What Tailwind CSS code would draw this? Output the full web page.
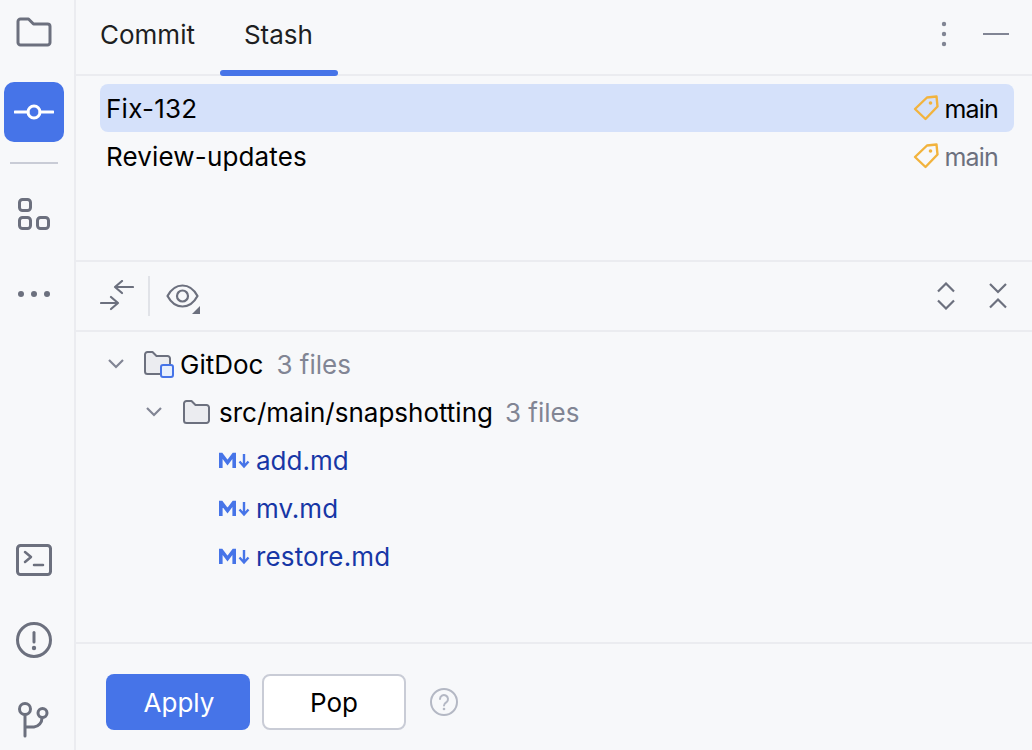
<!doctype html>
<html><head><meta charset="utf-8"><script src="https://cdn.jsdelivr.net/npm/@tailwindcss/browser@4"></script></head>
<body class="m-0">
<div class="flex w-[1032px] h-[750px] overflow-hidden bg-[#f7f8fa] font-['Inter',sans-serif] text-[26px] leading-[48px] text-black">
  <!-- sidebar -->
  <aside class="w-[76px] shrink-0 border-r-2 border-[#ebecf0] flex flex-col items-center pr-[10px] pl-[4px]">
    <svg class="mt-[14px] shrink-0" width="38" height="38" viewBox="0 0 38 38" fill="none" stroke="#6c707e" stroke-width="3"><path d="M3 7.500a2.500 2.500 0 0 1 2.500-2.500h8l5 5h14a2.500 2.500 0 0 1 2.500 2.500v16a2.500 2.500 0 0 1-2.500 2.500h-27a2.500 2.500 0 0 1-2.500-2.500z" stroke-linejoin="round"/></svg>
    <div class="mt-[30px] w-[60px] h-[60px] rounded-[10px] bg-[#4674e8] flex items-center justify-center shrink-0">
      <svg width="40" height="40" viewBox="0 0 40 40" fill="none" stroke="#fff" stroke-width="3"><circle cx="20" cy="20" r="6"/><path d="M1 20h13M26 20h13" stroke-linecap="round"/></svg>
    </div>
    <div class="mt-[20px] w-[48px] h-[2px] bg-[#c9ccd6] shrink-0"></div>
    <svg class="mt-[33px] shrink-0" width="34" height="34" viewBox="0 0 34 34" fill="none" stroke="#6c707e" stroke-width="3"><rect x="2.500" y="2.500" width="11" height="11" rx="3"/><rect x="2.500" y="20.500" width="11" height="11" rx="3"/><rect x="20.500" y="20.500" width="11" height="11" rx="3"/></svg>
    <svg class="mt-[59px] shrink-0" width="34" height="8" viewBox="0 0 34 8" fill="#6c707e"><circle cx="4" cy="4" r="3"/><circle cx="17" cy="4" r="3"/><circle cx="30" cy="4" r="3"/></svg>
    <svg class="mt-auto shrink-0" width="38" height="34" viewBox="0 0 38 34" fill="none" stroke="#6c707e" stroke-width="3" stroke-linecap="round" stroke-linejoin="round"><rect x="2.500" y="2.500" width="33" height="29" rx="3"/><path d="M10 9l6 5-6 5M19 22h9" stroke-width="2.500"/></svg>
    <svg class="mt-[44px] shrink-0" width="38" height="38" viewBox="0 0 38 38" fill="none" stroke="#6c707e" stroke-width="3"><circle cx="19" cy="19" r="16.500"/><path d="M19 11.500v9.500" stroke-linecap="round"/><circle cx="19" cy="27" r="2.200" fill="#6c707e" stroke="none"/></svg>
    <svg class="mt-[43px] mb-[12px] shrink-0" width="34" height="36" viewBox="0 0 34 36" fill="none" stroke="#6c707e" stroke-width="3" stroke-linecap="round"><circle cx="8" cy="7" r="5.500"/><circle cx="25.500" cy="11" r="4.500"/><path d="M8 13v21M8 25h9a9 9 0 0 0 8-9"/></svg>
  </aside>
  <main class="flex-1 min-w-0 flex flex-col">
    <!-- tabs -->
    <header class="h-[76px] shrink-0 border-b-2 border-[#ebecf0] flex items-start pl-[24px] text-[#1e1f22] relative">
      <span class="mt-[11px]">Commit</span>
      <div class="relative ml-[49px] mt-[11px]">Stash
        <div class="absolute left-[-24px] top-[59px] w-[118px] h-[6px] rounded-[3px] bg-[#4674e8]"></div>
      </div>
      <svg class="ml-auto mt-[21px]" width="6" height="26" viewBox="0 0 6 26" fill="#818594"><circle cx="3" cy="3" r="2.200"/><circle cx="3" cy="13" r="2.200"/><circle cx="3" cy="23" r="2.200"/></svg>
      <div class="ml-[36px] mr-[23px] mt-[33px] w-[26px] h-[2px] bg-[#818594]"></div>
    </header>
    <!-- stashes -->
    <section class="h-[186px] shrink-0 border-b-2 border-[#ebecf0] pt-[8px] pl-[24px] pr-[18px]">
      <div class="h-[48px] rounded-[8px] bg-[#d5e1fa] flex items-center pl-[6px] pr-[16px]">
        <span class="pt-[2px] tracking-[0.25px]">Fix-132</span>
        <svg class="ml-auto mr-[5px]" width="26" height="26" viewBox="0 0 26 26" fill="none" stroke="#f2b33d" stroke-width="2.400" stroke-linejoin="round"><path d="M2 14L14 2.500 23.500 1.500 24.500 11.500 12.500 24z"/><circle cx="17.500" cy="8" r="1.800" fill="#f2b33d" stroke="none"/></svg>
        <span class="pt-[2px] text-[25px] tracking-[-0.8px]">main</span>
      </div>
      <div class="h-[48px] flex items-center pl-[6px] pr-[16px]">
        <span class="pt-[2px] tracking-[0.15px]">Review-updates</span>
        <svg class="ml-auto mr-[5px]" width="26" height="26" viewBox="0 0 26 26" fill="none" stroke="#f2b33d" stroke-width="2.400" stroke-linejoin="round"><path d="M2 14L14 2.500 23.500 1.500 24.500 11.500 12.500 24z"/><circle cx="17.500" cy="8" r="1.800" fill="#f2b33d" stroke="none"/></svg>
        <span class="pt-[2px] text-[25px] tracking-[-0.8px] text-[#6c707e]">main</span>
      </div>
    </section>
    <!-- toolbar -->
    <section class="h-[70px] shrink-0 border-b-2 border-[#ebecf0] flex items-center pl-[24px] pr-[25px]">
      <svg width="34" height="32" viewBox="0 0 34 32" fill="none" stroke="#6c707e" stroke-width="2.200" stroke-linecap="round" stroke-linejoin="round"><path d="M33 7H15M22 1l-7 6 7 6M1 23h17M11 17l7 6-7 6"/></svg>
      <div class="ml-[14px] w-[2px] h-[40px] bg-[#e1e3e8]"></div>
      <div class="ml-[16px] relative w-[36px] h-[32px]">
        <svg width="33" height="24" viewBox="0 0 33 24" class="mt-[4px]" fill="none" stroke="#6c707e" stroke-width="2.200"><path d="M1.500 12C5 5.500 10 1.500 16.500 1.500S28 5.500 31.500 12C28 18.500 23 22.500 16.500 22.500S5 18.500 1.500 12z" stroke-linejoin="round"/><circle cx="16.500" cy="12" r="5.500"/></svg>
        <svg class="absolute right-[2px] bottom-[-2px]" width="8" height="8" viewBox="0 0 8 8" fill="#6c707e"><path d="M8 0v8H0z"/></svg>
      </div>
      <svg class="ml-auto" width="18" height="28" viewBox="0 0 18 28" fill="none" stroke="#6c707e" stroke-width="2.200"><path d="M1 9.500L9 1.500 17 9.500M1 18.500L9 26.500 17 18.500"/></svg>
      <svg class="ml-[34px]" width="18" height="28" viewBox="0 0 18 28" fill="none" stroke="#6c707e" stroke-width="2.200"><path d="M1 2L9 10 17 2M1 25.500L9 17.500 17 25.500"/></svg>
    </section>
    <!-- tree -->
    <section class="h-[312px] shrink-0 border-b-2 border-[#ebecf0] pt-[8px]">
      <div class="h-[48px] flex items-center pl-[32px]">
        <svg width="16" height="10" viewBox="0 0 16 10" fill="none" stroke="#818594" stroke-width="2.200"><path d="M1 1l7 7 7-7"/></svg>
        <span class="ml-[20px] relative w-[32px] h-[26px] shrink-0">
          <svg width="28" height="24" viewBox="0 0 28 24" fill="#ebecf0" stroke="#6c707e" stroke-width="2"><path d="M1 3.500A2.500 2.500 0 0 1 3.500 1h5l4 4h11A2.500 2.500 0 0 1 26 7.500V20.500A2.500 2.500 0 0 1 23.500 23h-20A2.500 2.500 0 0 1 1 20.500z" stroke-linejoin="round"/></svg>
          <span class="absolute left-[16px] top-[13px] w-[14px] h-[14px] rounded-[3px] border-2 border-[#4674e8] bg-[#e7effd]"></span>
        </span>
        <span class="ml-[4px] pt-[2px]">GitDoc</span><span class="ml-[13px] pt-[2px] text-[#818594]">3 files</span>
      </div>
      <div class="h-[48px] flex items-center pl-[70px]">
        <svg width="16" height="10" viewBox="0 0 16 10" fill="none" stroke="#818594" stroke-width="2.200"><path d="M1 1l7 7 7-7"/></svg>
        <svg class="ml-[21px]" width="28" height="24" viewBox="0 0 28 24" fill="#ebecf0" stroke="#6c707e" stroke-width="2"><path d="M1 3.500A2.500 2.500 0 0 1 3.500 1h5l4 4h11A2.500 2.500 0 0 1 26 7.500V20.500A2.500 2.500 0 0 1 23.500 23h-20A2.500 2.500 0 0 1 1 20.500z" stroke-linejoin="round"/></svg>
        <span class="ml-[8px] pt-[2px]">src/main/snapshotting</span><span class="ml-[12px] pt-[2px] text-[#818594]">3 files</span>
      </div>
      <div class="h-[48px] flex items-center pl-[142px]">
        <svg width="32" height="18" viewBox="0 0 32 18" fill="none" stroke="#4674e8"><path d="M2.800 17V3.500h.6L9.500 11.500 15.600 3.500h.6V17" stroke-width="3.600" stroke-linejoin="miter"/><path d="M26 3v12M21.500 10.500L26 15.500l4.500-5" stroke-width="2.400"/></svg>
        <span class="ml-[6px] pt-[2px] text-[#1737a6]">add.md</span>
      </div>
      <div class="h-[48px] flex items-center pl-[142px]">
        <svg width="32" height="18" viewBox="0 0 32 18" fill="none" stroke="#4674e8"><path d="M2.800 17V3.500h.6L9.500 11.500 15.600 3.500h.6V17" stroke-width="3.600" stroke-linejoin="miter"/><path d="M26 3v12M21.500 10.500L26 15.500l4.500-5" stroke-width="2.400"/></svg>
        <span class="ml-[6px] pt-[2px] text-[#1737a6]">mv.md</span>
      </div>
      <div class="h-[48px] flex items-center pl-[142px]">
        <svg width="32" height="18" viewBox="0 0 32 18" fill="none" stroke="#4674e8"><path d="M2.800 17V3.500h.6L9.500 11.500 15.600 3.500h.6V17" stroke-width="3.600" stroke-linejoin="miter"/><path d="M26 3v12M21.500 10.500L26 15.500l4.500-5" stroke-width="2.400"/></svg>
        <span class="ml-[6px] pt-[2px] tracking-[0.15px] text-[#1737a6]">restore.md</span>
      </div>
    </section>
    <!-- footer -->
    <footer class="flex-1 flex items-start pl-[30px] pt-[30px]">
      <button class="w-[144px] h-[56px] rounded-[8px] bg-[#4674e8] text-white pt-[2px] pl-[2px] text-center">Apply</button>
      <button class="ml-[12px] w-[144px] h-[56px] rounded-[8px] bg-white border-2 border-[#c9ccd6] pt-[2px] text-center">Pop</button>
      <svg class="ml-[24px] mt-[14px]" width="28" height="28" viewBox="0 0 28 28" fill="none" stroke="#b4b8c4" stroke-width="2"><circle cx="14" cy="14" r="13"/><path d="M10 11a4 4 0 1 1 6.500 3.200c-1.500 1-2.500 1.800-2.500 3.300" stroke-linecap="round"/><circle cx="14" cy="21" r="1.300" fill="#b4b8c4" stroke="none"/></svg>
    </footer>
  </main>
</div>
</body></html>
